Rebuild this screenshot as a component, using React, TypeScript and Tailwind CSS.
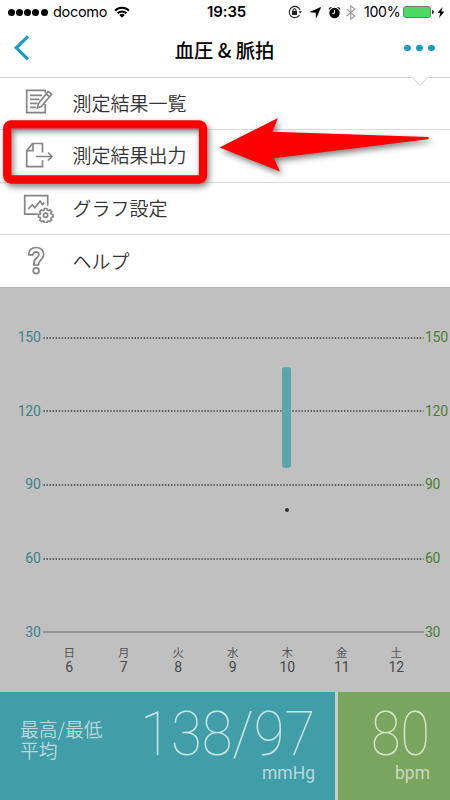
import React from "react";

const JP = "font-['Noto_Sans_CJK_JP',sans-serif]";

const levels = ["150", "120", "90", "60", "30"];
const days = [
  ["日", "6"],
  ["月", "7"],
  ["火", "8"],
  ["水", "9"],
  ["木", "10"],
  ["金", "11"],
  ["土", "12"],
];

function ListIcon() {
  return (
    <svg width="32" height="30" viewBox="0 0 32 30" fill="none" stroke="#858585" strokeWidth="1.7">
      <path d="M22.200 5.500V3.300H3.700v22.300h18.500V17" />
      <path d="M7 8.400h12M7 12.400h9.500M7 16.400h7.500M7 20.400h6" />
      <path d="M25 4.400l3.600 2.800-10 12.200-4.200 1.600.9-4.200zM23 7l3.400 2.700" />
    </svg>
  );
}

function ExportIcon() {
  return (
    <svg width="32" height="30" viewBox="0 0 32 30" fill="none" stroke="#858585" strokeWidth="1.7">
      <path d="M19.500 12.500V3.500H9.500L3.700 10.700v16h15.800v-6.500" />
      <path d="M10 3.500v7.200H3.700M12.800 16.500h16M25 12.500l4 4-4 4" />
    </svg>
  );
}

function GraphIcon() {
  return (
    <svg width="32" height="32" viewBox="0 0 32 32" fill="none" stroke="#858585" strokeWidth="1.7">
      <path d="M24.700 14.700V4.700H1.700v18.500h13" />
      <path d="M5.200 18l4-4 2.700 2.700 5.200-6.500 2.300 3.200 2-1.800" />
      <path
        strokeLinejoin="round"
        strokeWidth="2"
        d="M21 14.800h3.200l.5 2 1.300.6 1.900-1 2.200 2.200-1 1.900.5 1.200 2.100.6v3l-2.100.6-.5 1.200 1 1.900-2.200 2.100-1.900-1-1.200.5-.6 2.100h-3l-.6-2.100-1.200-.5-1.900 1-2.100-2.100 1-1.900-.5-1.200-2.100-.6v-3l2.100-.6.5-1.200-1-1.900 2.100-2.200 1.900 1 1.200-.6z"
        transform="translate(4.300 5.500) scale(.81)"
      />
      <circle cx="22.600" cy="24.200" r="2.100" />
    </svg>
  );
}

function HelpIcon() {
  return (
    <svg width="30" height="32" viewBox="0 0 30 32" fill="none" stroke="#858585" strokeWidth="1.7" strokeLinejoin="round">
      <path d="M5.600 10.800C5.600 6.300 8.800 3.500 13.200 3.500s7.500 2.900 7.500 7c0 3-1.600 4.500-3.300 6-1.500 1.300-1.900 2.300-1.900 4.500h-4.800c0-3.700.9-5.300 2.900-7 1.500-1.300 2.300-2 2.300-3.400 0-1.600-1.100-2.700-2.800-2.700-1.800 0-2.800 1.100-2.900 2.900z" />
      <circle cx="13.100" cy="26.800" r="2.900" />
    </svg>
  );
}

const menu = [
  { label: "測定結果一覧", icon: <ListIcon /> },
  { label: "測定結果出力", icon: <ExportIcon /> },
  { label: "グラフ設定", icon: <GraphIcon /> },
  { label: "ヘルプ", icon: <HelpIcon /> },
];

function StatusBar() {
  return (
    <div className="flex h-6 items-center pl-[7.5px] font-[Inter,sans-serif] text-[14.5px] leading-6 text-black">
      <div className="flex w-[45.500px] gap-[1.300px]">
        {[0, 1, 2, 3, 4].map((i) => (
          <span key={i} className="size-[7px] rounded-full bg-black" />
        ))}
      </div>
      <span className="w-[61px] whitespace-nowrap text-[14.5px] tracking-[-0.3px]">docomo</span>
      <svg width="16" height="12" viewBox="0 0 16 12" fill="none" stroke="#000" strokeWidth="1.900">
        <path d="M1 4.600a10 10 0 0 1 14 0M3.600 7.300a6.300 6.300 0 0 1 8.800 0" />
        <path d="M5.300 9a3.800 3.800 0 0 1 5.400 0L8 11.700z" fill="#000" stroke="none" />
      </svg>
      <span className="ml-[77px] w-[81px] text-[15px] font-semibold tracking-[-0.1px]">19:35</span>
      <svg width="14" height="14" viewBox="0 0 14 14" fill="none" stroke="#222" strokeWidth="1.100">
        <path d="M11.600 10A5.600 5.600 0 1 1 12 4.800" />
        <path d="M10.600 6.200h3.200l-1.600 2.400z" fill="#222" stroke="none" />
        <rect x="4" y="6" width="5" height="4" fill="#222" stroke="none" />
        <path d="M5 6.400V5.300a1.500 1.500 0 0 1 3 0v1.100" />
      </svg>
      <svg className="ml-[7.500px]" width="11" height="11" viewBox="0 0 11 11">
        <path d="M10.800.3L6.300 10.700 5.800 5.400.2 5.100z" stroke="#000" strokeWidth=".5" />
      </svg>
      <svg className="ml-[7px]" width="13" height="13" viewBox="0 0 13 13">
        <circle cx="6.500" cy="7" r="5.200" />
        <path d="M.7 4.200A3 3 0 0 1 4 .9zM12.300 4.200A3 3 0 0 0 9 .9z" />
        <path d="M6.500 4v3.300H4.200" fill="none" stroke="#fff" />
      </svg>
      <svg className="ml-[5.500px]" width="10" height="15" viewBox="0 0 10 15" fill="none" stroke="#999" strokeWidth="1.100">
        <path d="M.8 4l8 7-4 3.200V.8l4 3.200-8 7" />
      </svg>
      <span className="ml-[8px] w-[39px] text-[14.2px] tracking-[-0.3px]">100%</span>
      <div className="flex h-[12px] w-[28px] rounded-[3px] border border-[#777] bg-[#4cd964]" />
      <span className="ml-px h-[4px] w-[1.500px] rounded-r bg-[#333]" />
      <svg className="ml-[3px]" width="8" height="11" viewBox="0 0 8 11">
        <path d="M5.600 0L.5 6h2.800L2 11l5.400-6.400H4.500z" />
      </svg>
    </div>
  );
}

function Header() {
  return (
    <div className="relative h-[54px] border-b border-[#d2d2d2]">
      <div className="grid h-[48px] grid-cols-[1fr_auto_1fr] items-center pl-[14px] pr-[15px]">
        <svg width="16" height="26" viewBox="0 0 16 26" fill="none" stroke="#1a9dc4" strokeWidth="3.200">
          <path d="M14 1.400L2.300 12.800 14 24.400" />
        </svg>
        <h1 className={`${JP} mt-[3px] whitespace-pre text-[19.3px] font-medium leading-[30px] text-black`}>血圧 &amp; 脈拍</h1>
        <div className="flex justify-end gap-[5.500px]">
          <span className="size-[6.600px] rounded-full bg-[#1c9dbd]" />
          <span className="size-[6.600px] rounded-full bg-[#1c9dbd]" />
          <span className="size-[6.600px] rounded-full bg-[#1c9dbd]" />
        </div>
      </div>
      <svg className="absolute left-[412px] top-[52px]" width="16" height="12" viewBox="0 0 16 12">
        <path d="M.5 0h15v1.500L8 9.600.5 1.500z" fill="#fff" />
        <path d="M.5 1.500L8 9.600l7.500-8.100" fill="none" stroke="#d2d2d2" />
      </svg>
    </div>
  );
}

function Callout() {
  return (
    <svg className="pointer-events-none absolute left-0 top-[110px]" width="450" height="90" viewBox="0 110 450 90" fill="none">
      <g style={{ filter: "drop-shadow(2px 3px 3px rgba(0,0,0,.5))" }}>
        <rect x="7.200" y="124.300" width="195.800" height="55.200" rx="4" stroke="#fe0000" strokeWidth="8.300" />
        <path d="M219.500 147.500L278 118l-5.500 13.700L428 137l1 1-1 1.200L274 158.200l6 13.400z" fill="#fe0000" />
      </g>
    </svg>
  );
}

function Chart() {
  return (
    <div className="relative h-[405px] border-t border-[#b4b4b4] bg-[#c0c0c0] pt-[13px] font-[Roboto,sans-serif]">
      {levels.map((v) => (
        <div key={v} className="flex h-[73.600px] items-center">
          <span className="w-[40.500px] text-right text-[14px] tracking-[-0.3px] text-[#41808f]">{v}</span>
          <svg className="ml-[2px]" width="381" height="2" viewBox="0 0 381 2">
            {v === "30" ? (
              <path d="M0 1h381" stroke="#858585" strokeWidth="1.600" />
            ) : (
              <path d="M.5 1h380" stroke="#3c3c3c" strokeWidth="1.400" strokeDasharray="1.400 1.635" />
            )}
          </svg>
          <span className="ml-[1.500px] text-[14px] tracking-[-0.3px] text-[#4a7f39]">{v}</span>
        </div>
      ))}
      <div className="mt-[-23.500px] ml-[42px] grid w-[381.500px] grid-cols-7 text-center">
        {days.map(([d, n]) => (
          <div key={n} className="flex flex-col">
            <span className={`${JP} text-[11.5px] leading-[14.500px] text-[#555]`}>{d}</span>
            <span className="text-[14px] leading-[14px] text-[#484848]">{n}</span>
          </div>
        ))}
      </div>
      <span className="absolute left-[282px] top-[79px] h-[101px] w-[9px] rounded-[3px] bg-[#5fa3ab]" />
      <span className="absolute left-[285px] top-[220px] size-[3.500px] rounded-full bg-[#333]" />
    </div>
  );
}

function Summary() {
  return (
    <div className="flex h-[108px] gap-[3px] bg-[#bdd0c9]">
      <div className="flex w-[335px] justify-between bg-[#419da7] pl-[20px] pr-[20px] text-[#b9d9dc]">
        <div className={`${JP} pt-[27px] text-[18.800px] font-[350] leading-[20.500px]`}>
          最高/最低
          <br />
          平均
        </div>
        <div className="flex flex-col items-end pt-[11.500px] font-[Roboto,sans-serif]">
          <span className="origin-right scale-x-[0.92] text-[61px] font-thin leading-[61px] text-[#c8e4e6]">138/97</span>
          <span className="text-[17.500px] leading-[17px]">mmHg</span>
        </div>
      </div>
      <div className="flex w-[112px] flex-col items-end bg-[#79a55e] pr-[20px] pt-[11.500px] font-[Roboto,sans-serif] text-[#c8d9bd]">
        <span className="origin-right scale-x-[0.88] text-[61px] font-thin leading-[61px] text-[#d5e4ca]">80</span>
        <span className="text-[17.500px] leading-[17px]">bpm</span>
      </div>
    </div>
  );
}

export default function App() {
  return (
    <div className="relative h-[800px] w-[450px] overflow-hidden bg-white">
      <StatusBar />
      <Header />
      <nav className={`${JP} h-[209px]`}>
        {menu.map(({ label, icon }, i) => (
          <div key={label} className={`flex h-[52.300px] items-center pb-[2.500px] pl-[23px] ${i < 3 ? "border-b border-[#dcdcdc]" : ""}`}>
            <div className="w-[49.500px]">{icon}</div>
            <span className="pt-[2px] text-[19px] font-[350] text-[#333]">{label}</span>
          </div>
        ))}
      </nav>
      <Chart />
      <Summary />
      <Callout />
    </div>
  );
}
